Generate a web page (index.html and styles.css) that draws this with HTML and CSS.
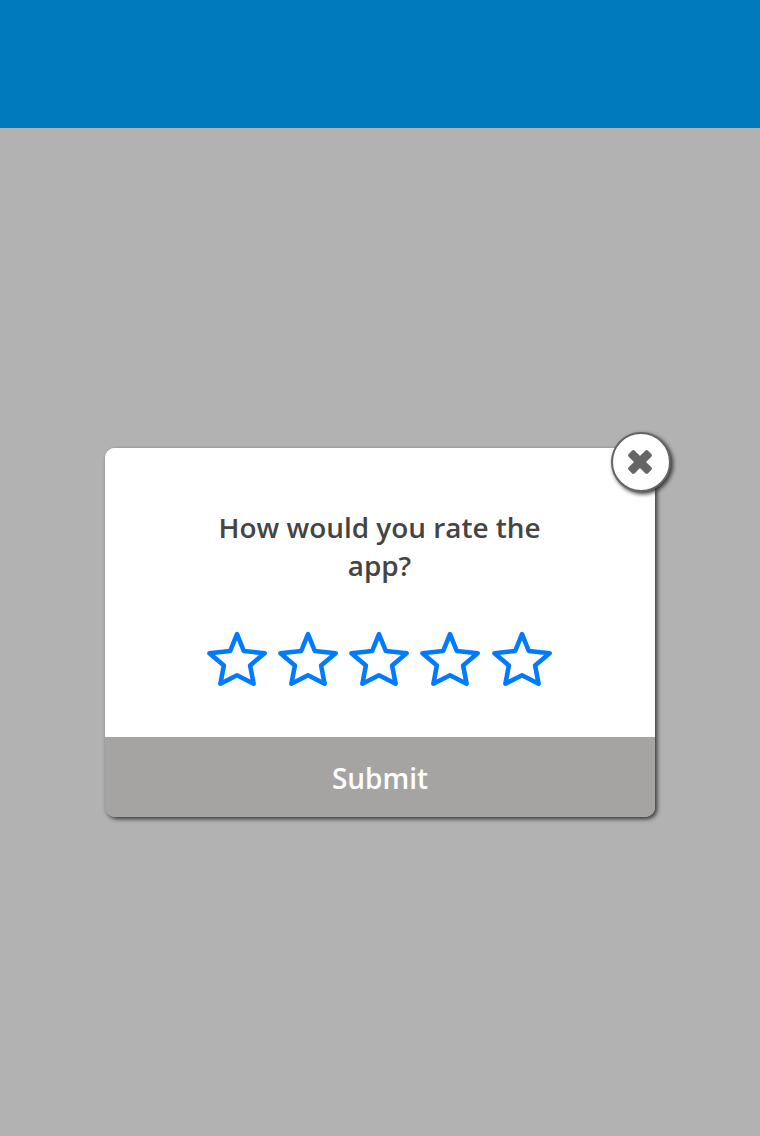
FILE: index.html
```html
<!DOCTYPE html>
<html lang="en">
<head>
<meta charset="utf-8">
<title>Rate the app</title>
<link rel="stylesheet" href="styles.css">
</head>
<body>
<header class="topbar"></header>
<main class="stage">
  <section class="dialog">
    <button class="close" aria-label="Close">
      <svg class="close-icon" viewBox="-12 -12 24 24"><rect x="-13.7" y="-4.3" width="27.4" height="8.6" rx="2" transform="rotate(45)"/><rect x="-13.7" y="-4.3" width="27.4" height="8.6" rx="2" transform="rotate(-45)"/></svg>
    </button>
    <div class="content">
      <h1 class="question">How would you rate the app?</h1>
      <div class="stars">
        <svg class="star" viewBox="0 0 60 56"><path d="M30 3.2 23.2 20 2.4 22.2 16.9 34.4 13.4 52.8 30 44.2 46.6 52.8 43.1 34.4 57.6 22.2 36.8 20Z"/></svg>
        <svg class="star" viewBox="0 0 60 56"><path d="M30 3.2 23.2 20 2.4 22.2 16.9 34.4 13.4 52.8 30 44.2 46.6 52.8 43.1 34.4 57.6 22.2 36.8 20Z"/></svg>
        <svg class="star" viewBox="0 0 60 56"><path d="M30 3.2 23.2 20 2.4 22.2 16.9 34.4 13.4 52.8 30 44.2 46.6 52.8 43.1 34.4 57.6 22.2 36.8 20Z"/></svg>
        <svg class="star" viewBox="0 0 60 56"><path d="M30 3.2 23.2 20 2.4 22.2 16.9 34.4 13.4 52.8 30 44.2 46.6 52.8 43.1 34.4 57.6 22.2 36.8 20Z"/></svg>
        <svg class="star" viewBox="0 0 60 56"><path d="M30 3.2 23.2 20 2.4 22.2 16.9 34.4 13.4 52.8 30 44.2 46.6 52.8 43.1 34.4 57.6 22.2 36.8 20Z"/></svg>
      </div>
    </div>
    <button class="submit">Submit</button>
  </section>
</main>
</body>
</html>
```
FILE: styles.css
```css
* { box-sizing: border-box; }
body {
  margin: 0;
  min-height: 1136px;
  background: #b2b2b2;
  font-family: "Open Sans", "Noto Sans", sans-serif;
}
.topbar {
  height: 128px;
  background: #0079bd;
}
.stage {
  display: flex;
  justify-content: center;
  padding-top: 320px;
}
.dialog {
  position: relative;
  width: 550px;
  height: 369px;
  display: flex;
  flex-direction: column;
  border-radius: 10px;
  background: linear-gradient(#fff 50%, #a5a4a2 50%);
  box-shadow: 2px 2px 4px #333;
}
.content {
  flex: 1;
  display: flex;
  flex-direction: column;
  align-items: center;
  padding-top: 60px;
  border-radius: 10px 10px 0 0;
  background: #fff;
}
.question {
  width: 350px;
  margin: 0;
  padding-right: 1px;
  color: #444;
  font-size: 27.9px;
  font-weight: 600;
  line-height: 38px;
  text-align: center;
}
.stars {
  display: flex;
  gap: 11.25px;
  margin: 47px 2px 0 0;
}
.star {
  width: 60px;
  height: 56px;
  fill: none;
  stroke: #007bff;
  stroke-width: 4.6;
  stroke-linejoin: round;
}
.submit {
  height: 80px;
  padding: 2px 0 0;
  border: 0;
  border-radius: 0 0 10px 10px;
  background: #a5a4a2;
  color: #fff;
  font: 600 28px "Open Sans", "Noto Sans", sans-serif;
}
.close {
  position: absolute;
  top: -16px;
  right: -16px;
  width: 60px;
  height: 60px;
  display: flex;
  align-items: center;
  justify-content: center;
  padding: 0 2px 0 0;
  border: 2px solid #666465;
  border-radius: 50%;
  background: #fff;
  box-shadow: 2px 2px 4px #333;
}
.close-icon {
  width: 24px;
  height: 24px;
  fill: #666465;
  overflow: visible;
}
```
